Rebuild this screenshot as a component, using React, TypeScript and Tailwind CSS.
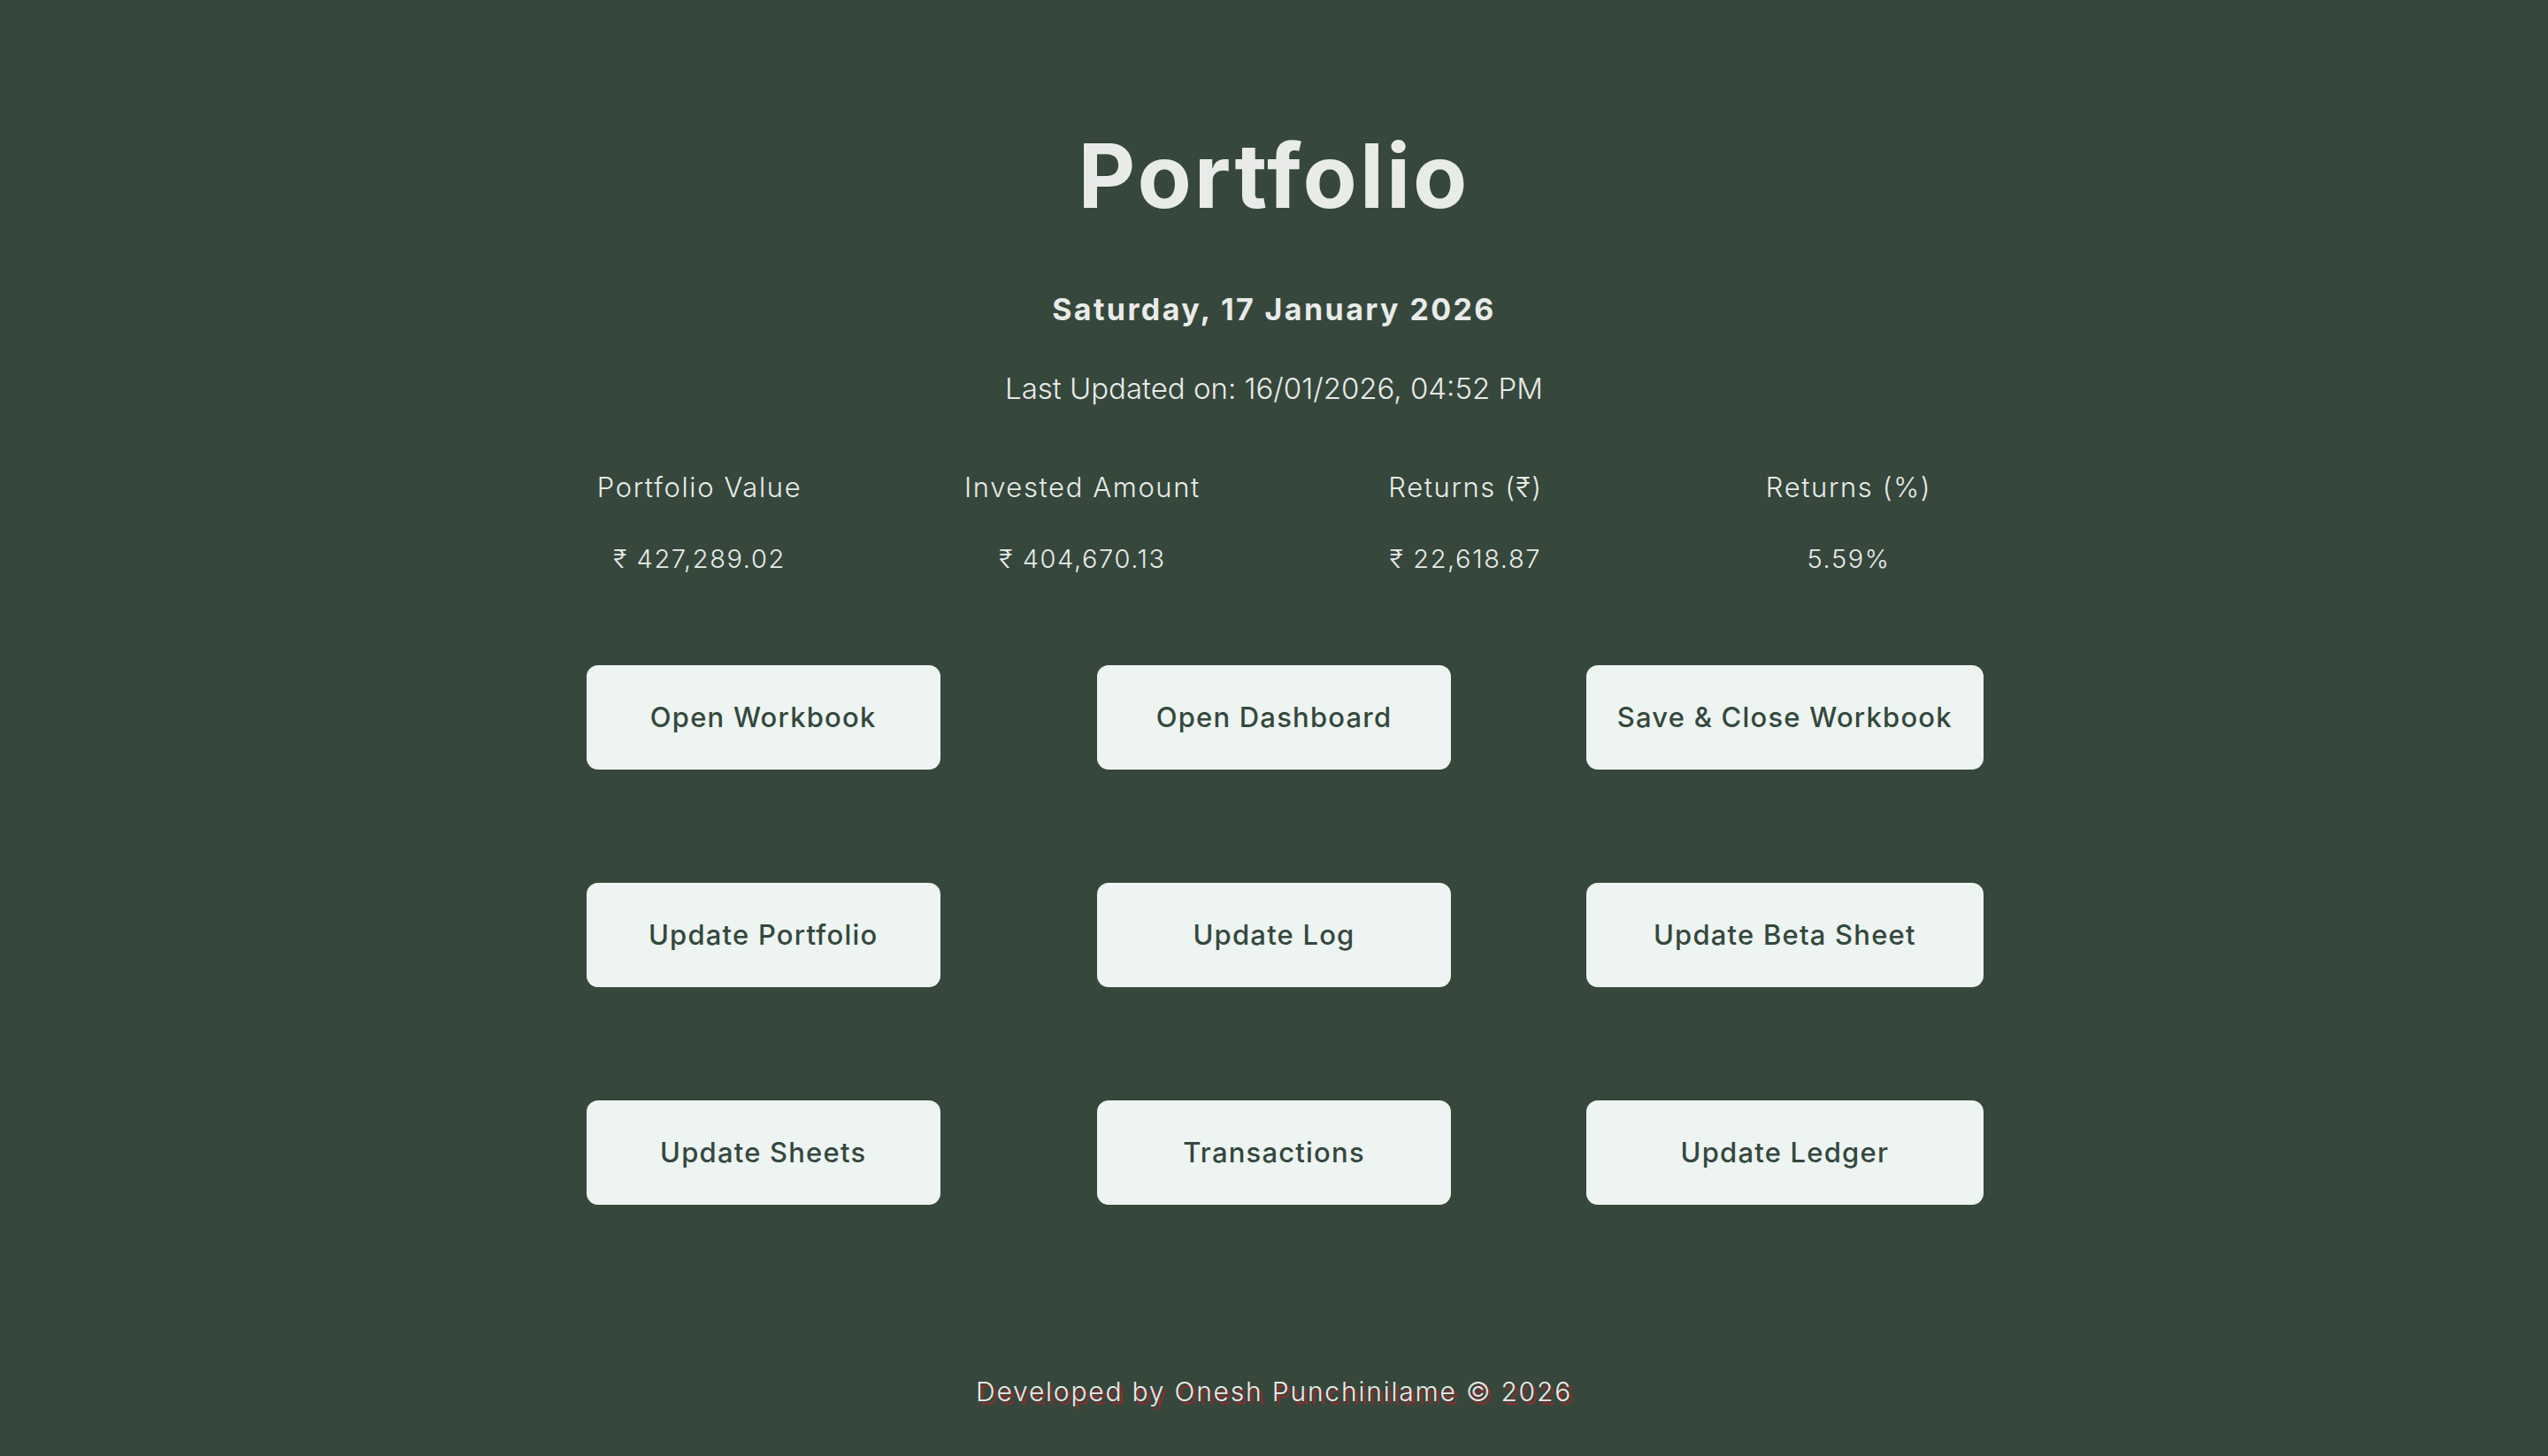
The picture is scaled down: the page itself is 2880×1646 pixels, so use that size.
const stats = [
  { label: "Portfolio Value", value: "₹ 427,289.02" },
  { label: "Invested Amount", value: "₹ 404,670.13" },
  { label: "Returns (₹)", value: "₹ 22,618.87" },
  { label: "Returns (%)", value: "5.59%" },
];

// laid out column by column so every button in a column shares its width
const columns = [
  ["Open Workbook", "Update Portfolio", "Update Sheets"],
  ["Open Dashboard", "Update Log", "Transactions"],
  ["Save & Close Workbook", "Update Beta Sheet", "Update Ledger"],
];

export default function App() {
  return (
    <div className="min-h-screen bg-[#36473c] font-['Inter',sans-serif] text-[#e8ebe8] flex flex-col items-center pt-[149px]">
      <h1 className="text-[100px] leading-none font-bold tracking-[3px]">Portfolio</h1>
      <p className="mt-[84px] text-[34px] leading-none font-bold tracking-[2.4px]">Saturday, 17 January 2026</p>
      <p className="mt-[56px] text-[33px] leading-none font-light">Last Updated on: 16/01/2026, 04:52 PM</p>

      <div className="mt-[79px] grid w-[1732px] grid-cols-4 text-center">
        {stats.map((s) => (
          <div key={s.label} className="flex flex-col items-center tracking-[1.6px]">
            <span className="text-[31px] leading-none font-light">{s.label}</span>
            <span className="mt-[51px] text-[29px] leading-none font-light">{s.value}</span>
          </div>
        ))}
      </div>

      <div className="mt-[106px] grid w-[1732px] grid-cols-3">
        {columns.map((col, i) => (
          <div key={i} className="mx-auto flex w-fit flex-col gap-[128px]">
            {col.map((a) => (
              <button
                key={a}
                className="h-[118px] w-full min-w-[400px] rounded-[13px] bg-[#edf4f1] px-[35px] text-[31px] font-medium tracking-[1.2px] text-[#34483d]"
              >
                {a}
              </button>
            ))}
          </div>
        ))}
      </div>

      <footer className="mt-[196px] pb-[40px] text-[30px] leading-none font-light tracking-[1.8px] [text-shadow:4px_4px_1px_#8e2f2f]">
        Developed by Onesh Punchinilame © 2026
      </footer>
    </div>
  );
}
